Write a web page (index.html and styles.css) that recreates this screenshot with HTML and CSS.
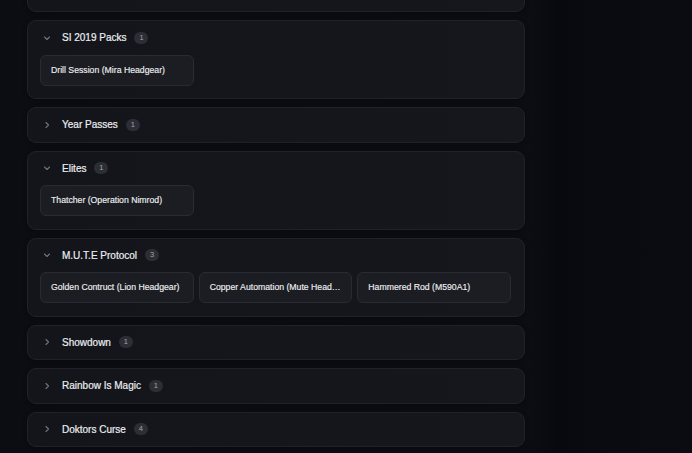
FILE: index.html
```html
<!DOCTYPE html>
<html lang="en">
<head>
<meta charset="utf-8">
<title>Packs</title>
<link rel="stylesheet" href="styles.css">
</head>
<body>
<div class="page">
  <div class="list">
    <section class="card card-cut"></section>

    <section class="card">
      <div class="head">
        <svg class="chev" viewBox="0 0 8 8"><polyline points="1.5,3 4,5.5 6.5,3"/></svg>
        <span class="title">SI 2019 Packs</span><span class="badge">1</span>
      </div>
      <div class="items">
        <div class="chip">Drill Session (Mira Headgear)</div>
      </div>
    </section>

    <section class="card">
      <div class="head">
        <svg class="chev" viewBox="0 0 8 8"><polyline points="3,1.5 5.5,4 3,6.5"/></svg>
        <span class="title">Year Passes</span><span class="badge">1</span>
      </div>
    </section>

    <section class="card">
      <div class="head">
        <svg class="chev" viewBox="0 0 8 8"><polyline points="1.5,3 4,5.5 6.5,3"/></svg>
        <span class="title">Elites</span><span class="badge">1</span>
      </div>
      <div class="items">
        <div class="chip">Thatcher (Operation Nimrod)</div>
      </div>
    </section>

    <section class="card">
      <div class="head">
        <svg class="chev" viewBox="0 0 8 8"><polyline points="1.5,3 4,5.5 6.5,3"/></svg>
        <span class="title">M.U.T.E Protocol</span><span class="badge">3</span>
      </div>
      <div class="items">
        <div class="chip">Golden Contruct (Lion Headgear)</div>
        <div class="chip">Copper Automation (Mute Headgear)</div>
        <div class="chip">Hammered Rod (M590A1)</div>
      </div>
    </section>

    <section class="card">
      <div class="head">
        <svg class="chev" viewBox="0 0 8 8"><polyline points="3,1.5 5.5,4 3,6.5"/></svg>
        <span class="title">Showdown</span><span class="badge">1</span>
      </div>
    </section>

    <section class="card">
      <div class="head">
        <svg class="chev" viewBox="0 0 8 8"><polyline points="3,1.5 5.5,4 3,6.5"/></svg>
        <span class="title">Rainbow Is Magic</span><span class="badge">1</span>
      </div>
    </section>

    <section class="card">
      <div class="head">
        <svg class="chev" viewBox="0 0 8 8"><polyline points="3,1.5 5.5,4 3,6.5"/></svg>
        <span class="title">Doktors Curse</span><span class="badge">4</span>
      </div>
    </section>
  </div>
</div>
</body>
</html>
```

FILE: styles.css
```css
html, body {
  margin: 0;
  padding: 0;
  height: 100%;
}
body {
  background: #0a0b10;
  font-family: "Liberation Sans", Arial, sans-serif;
  overflow: hidden;
}
.page {
  height: 453px;
  overflow: hidden;
  background: linear-gradient(90deg, #0b0d12 0px, #0b0d13 530px, #08090e 560px, #0a0b10 600px, #0b0c11 692px);
}
.list {
  width: 498px;
  margin-left: 27px;
  display: flex;
  flex-direction: column;
  gap: 8px;
}
.card {
  box-sizing: border-box;
  background: linear-gradient(90deg, #13151a, #15171c);
  border: 1px solid #1f2228;
  border-radius: 9px;
  box-shadow: 0 1px 4px rgba(0, 0, 0, 0.35);
}
.card-cut {
  height: 36px;
  margin-top: -24px;
}
.head {
  height: 33.5px;
  display: flex;
  align-items: center;
  padding-left: 15px;
}
.chev {
  width: 8px;
  height: 8px;
  margin-right: 11px;
  fill: none;
  stroke: #70747b;
  stroke-width: 1.1;
  stroke-linecap: round;
  stroke-linejoin: round;
}
.title {
  font-size: 10px;
  color: #eceef1;
  -webkit-text-stroke: 0.2px #eceef1;
}
.badge {
  margin-left: 8px;
  min-width: 14px;
  height: 12px;
  box-sizing: border-box;
  padding: 0 4px;
  border-radius: 6px;
  background: #2b2e34;
  color: #a3a6ac;
  font-size: 7.5px;
  line-height: 12px;
  text-align: center;
}
.items {
  display: flex;
  gap: 5px;
  padding: 0 13px 12.5px 12px;
}
.chip {
  box-sizing: border-box;
  width: 154px;
  height: 31px;
  padding: 0 10px;
  border: 1px solid #282b31;
  border-radius: 6px;
  background: #1b1d22;
  color: #eeeff1;
  -webkit-text-stroke: 0.15px #eeeff1;
  font-size: 8.7px;
  line-height: 29px;
  white-space: nowrap;
  overflow: hidden;
  text-overflow: ellipsis;
}
```
